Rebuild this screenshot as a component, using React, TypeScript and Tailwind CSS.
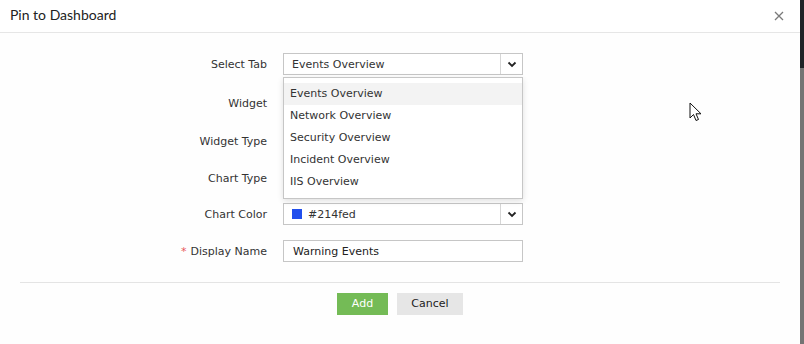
const TAB_OPTIONS = ['Events Overview', 'Network Overview', 'Security Overview', 'Incident Overview', 'IIS Overview']

function Chevron() {
  return (
    <svg width="10" height="7" viewBox="0 0 10 7" className="text-[#222]">
      <path d="M1.5 1.5 L5 5 L8.5 1.5" fill="none" stroke="currentColor" strokeWidth="1.8" />
    </svg>
  )
}

function SelectBox({ children }: { children?: React.ReactNode }) {
  return (
    <div className="flex h-[22px] w-[240px] items-stretch border border-[#c6c6c6] bg-white">
      <div className="flex flex-1 items-center gap-[6px] pl-[8px] pt-[2px]">{children}</div>
      <div className="flex w-[22px] items-center justify-center border-l border-[#d6d6d6]">
        <Chevron />
      </div>
    </div>
  )
}

function Row({ label, required, className, children }: { label: string; required?: boolean; className?: string; children?: React.ReactNode }) {
  return (
    <div className={`flex h-[22px] items-center ${className ?? ''}`}>
      <div className="w-[268px] pr-[1px] pt-[2px] text-right text-[#333]">
        {required && <span className="mr-[4px] text-[#e8555a]">*</span>}
        {label}
      </div>
      <div className="ml-[15px]">{children}</div>
    </div>
  )
}

function Cursor() {
  return (
    <svg width="14" height="21" viewBox="0 0 14 21" className="absolute left-[689px] top-[102px]">
      <path d="M1 1 L1 16 L4.5 12.5 L7 18.5 L9.5 17.5 L7 11.8 L12 11.8 Z" fill="white" stroke="#111" strokeWidth="1" strokeLinejoin="round" />
    </svg>
  )
}

export default function App() {
  return (
    <div className="relative flex h-[344px] w-[804px] overflow-hidden bg-white" style={{ fontFamily: '"DejaVu Sans", Verdana, sans-serif' }}>
      <div className="relative flex w-[800px] flex-col bg-[#fefefe] text-[11px]">
        <div className="flex h-[33px] items-start justify-between border-b border-[#e6e6e6] bg-white pl-[10px] pr-[16px] pt-[4px]">
          <span className="text-[14px] text-[#222]" style={{ fontFamily: 'Lato, sans-serif' }}>Pin to Dashboard</span>
          <svg width="10" height="10" viewBox="0 0 10 10" className="mt-[7px]">
            <path d="M1 1 L9 9 M9 1 L1 9" stroke="#7a7a7a" strokeWidth="1.3" />
          </svg>
        </div>

        <div className="pt-[20px]">
          <div className="relative">
            <Row label="Select Tab">
              <SelectBox>
                <span className="text-[#333]">Events Overview</span>
              </SelectBox>
            </Row>
            <div className="absolute left-[283px] top-[24px] z-10 w-[240px] border border-[#c6c6c6] bg-white py-[5px] shadow-[0_2px_6px_rgba(0,0,0,0.12)]">
              {TAB_OPTIONS.map((opt, i) => (
                <div key={opt} className={`flex h-[22px] items-center pl-[6px] text-[#333] ${i === 0 ? 'bg-[#f3f3f3]' : ''}`}>
                  {opt}
                </div>
              ))}
            </div>
          </div>
          <Row label="Widget" className="mt-[17px]">
            <SelectBox />
          </Row>
          <Row label="Widget Type" className="mt-[16px]">
            <SelectBox />
          </Row>
          <Row label="Chart Type" className="mt-[15px]">
            <SelectBox />
          </Row>
          <Row label="Chart Color" className="mt-[14px]">
            <SelectBox>
              <span className="mb-[2px] h-[10px] w-[10px] bg-[#214fed]" />
              <span className="text-[#333]">#214fed</span>
            </SelectBox>
          </Row>
          <Row label="Display Name" required className="mt-[15px]">
            <div className="flex h-[22px] w-[240px] items-center border border-[#c6c6c6] bg-white pl-[9px] pt-[2px] text-[#222]">
              Warning Events
            </div>
          </Row>
        </div>

        <div className="mx-[20px] mt-[20px] border-t border-[#e4e4e4]" />

        <div className="mt-[10px] flex justify-center gap-[9px]">
          <button className="h-[22px] w-[51px] bg-[#74bb56] text-white">Add</button>
          <button className="h-[22px] w-[66px] bg-[#e6e6e6] text-[#222]">Cancel</button>
        </div>

        <Cursor />
      </div>
      <div className="flex w-[4px] flex-col">
        <div className="h-[68px] bg-[#1f2327]" />
        <div className="flex-1 bg-[#747474]" />
      </div>
    </div>
  )
}
